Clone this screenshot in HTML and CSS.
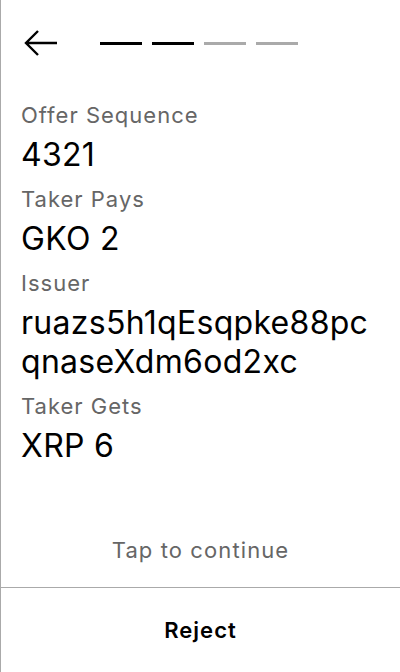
FILE: index.html
```html
<!DOCTYPE html>
<html>
<head>
<meta charset="utf-8">
<link rel="stylesheet" href="styles.css">
</head>
<body>
<div class="screen">
  <div class="header">
    <svg class="back" width="36" height="30" viewBox="0 0 36 30">
      <path d="M4 15 H35 M16 3 L4 15 L16 27" fill="none" stroke="#000" stroke-width="2.4" stroke-linecap="butt" stroke-linejoin="miter"/>
    </svg>
    <div class="steps">
      <span class="step done"></span>
      <span class="step done"></span>
      <span class="step"></span>
      <span class="step"></span>
    </div>
  </div>
  <div class="content">
    <div class="field">
      <div class="label">Offer Sequence</div>
      <div class="value">4321</div>
    </div>
    <div class="field">
      <div class="label">Taker Pays</div>
      <div class="value">GKO 2</div>
    </div>
    <div class="field">
      <div class="label">Issuer</div>
      <div class="value">ruazs5h1qEsqpke88pc<br>qnaseXdm6od2xc</div>
    </div>
    <div class="field">
      <div class="label">Taker Gets</div>
      <div class="value">XRP 6</div>
    </div>
  </div>
  <div class="tap">Tap to continue</div>
  <div class="footer">
    <button class="reject">Reject</button>
  </div>
</div>
</body>
</html>
```
FILE: styles.css
```css
html, body {
  margin: 0;
  padding: 0;
  background: #fff;
}
body {
  font-family: Inter, "Noto Sans", sans-serif;
  color: #000;
}
.screen {
  width: 400px;
  height: 672px;
  box-sizing: border-box;
  border-left: 1px solid #aaa;
  display: flex;
  flex-direction: column;
}
.header {
  height: 86px;
  display: flex;
  align-items: center;
  padding-left: 21px;
}
.back {
  display: block;
  margin-right: 42px;
}
.steps {
  display: flex;
  gap: 10px;
}
.step {
  display: block;
  width: 42px;
  height: 3px;
  background: #aaa;
}
.step.done {
  background: #000;
}
.content {
  flex: 1;
  padding: 15px 0 0 20px;
}
.field {
  margin-bottom: 11px;
}
.label {
  font-size: 22px;
  line-height: 28px;
  letter-spacing: 1px;
  color: #666;
  margin-bottom: 6px;
}
.value {
  font-size: 32px;
  line-height: 39px;
  letter-spacing: 0.3px;
  color: #000;
}
.tap {
  height: 74px;
  display: flex;
  align-items: center;
  justify-content: center;
  font-size: 22px;
  letter-spacing: 1.1px;
  color: #666;
}
.footer {
  height: 84px;
  border-top: 1px solid #aaa;
  display: flex;
  align-items: center;
  justify-content: center;
}
.reject {
  background: none;
  border: none;
  padding: 0;
  font-family: inherit;
  font-size: 22px;
  letter-spacing: 1px;
  font-weight: 600;
  color: #000;
}
```
